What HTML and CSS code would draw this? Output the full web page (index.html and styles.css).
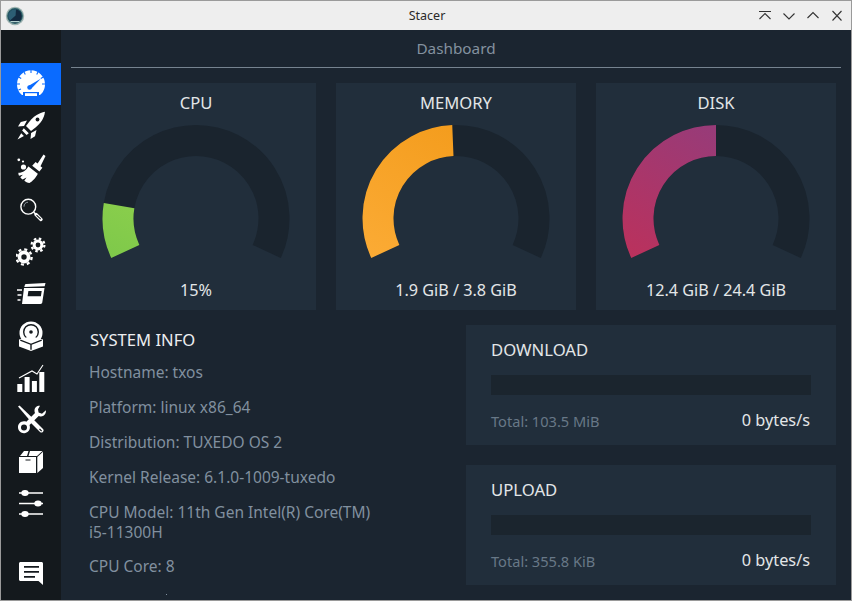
FILE: index.html
```html
<!DOCTYPE html>
<html lang="en">
<head>
<meta charset="utf-8">
<title>Stacer</title>
<link rel="stylesheet" href="styles.css">
</head>
<body>
<div class="window">
  <header class="titlebar">
    <div class="app-icon">
      <svg width="20" height="20" viewBox="0 0 20 20">
        <circle cx="10" cy="10" r="9.200" fill="#9fb3b1"/>
        <circle cx="10" cy="10" r="7.900" fill="#2a6068"/>
        <circle cx="10" cy="10" r="6.800" fill="#12293f"/>
        <path d="M5 14.500A6.800 6.800 0 0 1 11 3.300L10.600 9.500Z" fill="#2c5e74"/>
        <path d="M5.500 15.600h9" stroke="#b5d0ce" stroke-width="1.200"/>
      </svg>
    </div>
    <div class="app-title">Stacer</div>
    <div class="controls">
      <span class="ctl"><svg width="16" height="16" viewBox="0 0 16 16"><path class="ctl-stroke" d="M2 3.500h12M2.500 11L8 5.500l5.500 5.500"/></svg></span>
      <span class="ctl"><svg width="16" height="16" viewBox="0 0 16 16"><path class="ctl-stroke" d="M2.500 5.500L8 11l5.500-5.500"/></svg></span>
      <span class="ctl"><svg width="16" height="16" viewBox="0 0 16 16"><path class="ctl-stroke" d="M2.500 10L8 4.500l5.500 5.500"/></svg></span>
      <span class="ctl"><svg width="16" height="16" viewBox="0 0 16 16"><path class="ctl-stroke" d="M3.500 3l9 9.500M12.500 3l-9 9.500"/></svg></span>
    </div>
  </header>
  <div class="body">
    <nav class="sidebar">
      <div class="nav-item active">
        <svg class="ico" viewBox="0 0 30 30">
          <path fill="#fff" d="M4.400 24.500A14 14 0 1 1 25.600 24.500L24 26H6Z"/>
          <g stroke="#0a6bff" stroke-width="1.100">
            <path d="M15 1v3M8 3l1.300 2.600M22 3l-1.300 2.600M2.700 8l2.500 1.500M27.300 8l-2.500 1.500M1 15h3M29 15h-3M2.500 21l2.500-1"/>
          </g>
          <path d="M11.500 17.500L25 9.500L15 20Z" fill="#0a6bff"/>
          <circle cx="13.500" cy="18.500" r="2.200" fill="#0a6bff"/>
          <path d="M7 23h16v4H7z" fill="#0a6bff"/>
          <path d="M9 24.200h12v2.800H9z" fill="#fff"/>
        </svg>
      </div>
      <div class="nav-item">
        <svg class="ico" viewBox="0 0 30 30">
          <path fill="#fff" d="M29 .8C23 2 18 5 13.500 10.500L10 15l5 5 4.500-3.500C25 12 28 7.500 29 .8Z"/>
          <circle cx="21.500" cy="8.500" r="1.900" fill="#14191d"/>
          <path fill="#fff" d="M11 9.500L4.800 11 2 15.500l6-.6ZM20.500 19l-1.500 6.200-4.500 2.800.6-6Z"/>
          <path fill="#fff" d="M7.800 17.300l5 5-2.200 1.700-4.500-4.500ZM5.200 22.200l2.700 2.700L1.500 28.500Z"/>
        </svg>
      </div>
      <div class="nav-item">
        <svg class="ico" viewBox="0 0 30 30">
          <circle cx="2.800" cy="6.800" r="1.400" fill="#fff"/>
          <circle cx="7" cy="8.500" r="1.100" fill="#fff"/>
          <circle cx="7.500" cy="14" r="2.600" fill="#fff"/>
          <path fill="#fff" d="M27.500 1.500l2 1.500-5 10.200 1.900 1.600-3 3.700-7.200-5.800 3.400-3.600 2 1.300Z"/>
          <path fill="#fff" d="M12.500 13.500l9.300 7.300C20 24.500 16.500 28.500 13.500 30c-2.200-.3-3.800-1.100-5.200-2.200l2.200-3.300-3.900 2c-.9-.7-1.700-1.500-2.300-2.300l2.600-2.500-3.900 1c-.5-.9-.8-1.900-.6-2.900 4.800-.1 7.900-2.800 9.900-6.300Z"/>
        </svg>
      </div>
      <div class="nav-item">
        <svg class="ico" viewBox="0 0 30 30">
          <circle cx="12.300" cy="11.700" r="7.400" fill="none" stroke="#fff" stroke-width="1.400"/>
          <path d="M8 11.700a4.500 4.500 0 0 1 4-4.500" fill="none" stroke="#8b949c" stroke-width="1"/>
          <path d="M17.800 17.200l2 2" stroke="#fff" stroke-width="1.500"/>
          <path d="M20 19.600l5 4.800" stroke="#fff" stroke-width="3.400" stroke-linecap="round"/>
          <path d="M20.500 20.100l4.200 4" stroke="#14191d" stroke-width="1.100"/>
        </svg>
      </div>
      <div class="nav-item">
        <svg class="ico" viewBox="0 0 30 30">
          <circle cx="8" cy="20" r="6.400" fill="#fff"/>
          <circle cx="8" cy="20" r="7.600" fill="none" stroke="#fff" stroke-width="2.400" stroke-dasharray="3 2.970"/>
          <circle cx="8" cy="20" r="2.700" fill="#14191d"/>
          <circle cx="22" cy="8" r="5.400" fill="#fff"/>
          <circle cx="22" cy="8" r="6.400" fill="none" stroke="#fff" stroke-width="2.200" stroke-dasharray="2.500 2.530"/>
          <circle cx="22" cy="8" r="2.400" fill="#14191d"/>
        </svg>
      </div>
      <div class="nav-item">
        <svg class="ico" viewBox="0 0 30 30">
          <path fill="#fff" d="M8.800 6.300C9 5.500 9.500 5 10.500 5L29.500 4 28.700 7.200 8.300 8Z"/>
          <path fill="#fff" fill-rule="evenodd" d="M8 9h20.500L26.300 23.300c-.1.900-.8 1.700-1.800 1.700H6Zm4.400 3l-.8 5.200h13.300l.8-5.200Z"/>
          <path d="M1 11h5M1.500 16h4M1.500 21h3" stroke="#fff" stroke-width="1.300"/>
        </svg>
      </div>
      <div class="nav-item">
        <svg class="ico" viewBox="0 0 30 30">
          <circle cx="15" cy="12" r="11.500" fill="#fff"/>
          <circle cx="15" cy="11" r="7.300" fill="none" stroke="#14191d" stroke-width="1.400"/>
          <circle cx="15" cy="11" r="1.800" fill="#14191d"/>
          <path fill="#fff" d="M15 15l12 3.500v7L15 30 3 25.500v-7Z"/>
          <path fill="none" stroke="#14191d" stroke-width="1.400" d="M4.300 19.200L15 23.300l10.700-4.100"/>
          <path fill="none" stroke="#14191d" stroke-width="1.400" d="M15 23.300v5.500"/>
        </svg>
      </div>
      <div class="nav-item">
        <svg class="ico" viewBox="0 0 30 30">
          <path fill="#fff" d="M1.300 21h5v8h-5ZM8.600 14h5v15h-5ZM15.900 18h5v11h-5ZM23.300 9h5v20h-5Z"/>
          <path d="M3 15L16 8l5 3 6-9" fill="none" stroke="#fff" stroke-width="1.100"/>
        </svg>
      </div>
      <div class="nav-item">
        <svg class="ico" viewBox="0 0 30 30">
          <path d="M2 1.500l1.500-1L16 12.500l-2.500 2.500Z" fill="#fff"/>
          <path d="M17.500 14.500L27 24c1.800 2-1 4.800-3 3L14.500 17.500Z" fill="#fff"/>
          <path d="M23.500 24l2.200 2.200" stroke="#14191d" stroke-width="1.200"/>
          <path fill="#fff" fill-rule="evenodd" d="M24 .800c-2.800-.3-5.600 1.700-5.500 5 0 .9.200 1.500.5 2.200L10.300 16.700c-.8-.3-1.600-.5-2.500-.4-3.400.1-6 2.900-5.800 6.200.2 3.400 3 5.900 6.300 5.700 3.400-.2 5.800-3 5.600-6.300 0-.6-.2-1.200-.4-1.800l9.200-9c.8.300 1.500.4 2.300.3 3.200-.2 5.300-3.100 4.900-6.200l-3.900 3.500-3.400-1.100-.6-3.400ZM8 19.500a3 3 0 1 1 0 6 3 3 0 0 1 0-6Z"/>
        </svg>
      </div>
      <div class="nav-item">
        <svg class="ico" viewBox="0 0 30 30">
          <path fill="#fff" d="M3 10h17v16H3Z"/>
          <path fill="#fff" d="M4 9L8 4h4.500L11 9ZM12.500 9l1.500-5h12.500l-5.500 5Z"/>
          <path fill="#fff" d="M21.300 10l5.700-5.200V21l-5.700 5Z"/>
          <path d="M9.500 13h5" stroke="#14191d" stroke-width="1"/>
        </svg>
      </div>
      <div class="nav-item">
        <svg class="ico" viewBox="0 0 30 30">
          <path d="M3 4h24M3 14.500h24M3 25h24" stroke="#fff" stroke-width="1.700"/>
          <ellipse cx="9" cy="4" rx="3.700" ry="3" fill="#fff"/>
          <ellipse cx="22" cy="14.500" rx="3.700" ry="3" fill="#fff"/>
          <ellipse cx="9" cy="25" rx="3.700" ry="3" fill="#fff"/>
        </svg>
      </div>
      <div class="nav-item feedback">
        <svg class="ico" viewBox="0 0 30 30">
          <path fill="#fff" fill-rule="evenodd" d="M4.500 4h21c.8 0 1.500.7 1.500 1.500V27l-4.500-4H4.500C3.700 23 3 22.300 3 21.500v-16C3 4.700 3.700 4 4.500 4ZM8 8v1.800h15V8ZM8 13v1.800h15V13ZM8 18v1.800h11V18Z"/>
        </svg>
      </div>
    </nav>
    <main class="content">
      <h1 class="page-title">Dashboard</h1>
      <section class="gauges">
        <article class="card gauge">
          <h2 class="gauge-title">CPU</h2>
          <svg class="gauge-svg" viewBox="0 0 240 165">
            <defs>
              <linearGradient id="g-cpu" gradientUnits="userSpaceOnUse" x1="30" y1="150" x2="60" y2="90"><stop offset="0" stop-color="#7dc84a"/><stop offset="1" stop-color="#8ace4c"/></linearGradient>
              <linearGradient id="g-mem" gradientUnits="userSpaceOnUse" x1="40" y1="150" x2="120" y2="20"><stop offset="0" stop-color="#fbab35"/><stop offset="1" stop-color="#f49d1e"/></linearGradient>
              <linearGradient id="g-disk" gradientUnits="userSpaceOnUse" x1="40" y1="150" x2="120" y2="20"><stop offset="0" stop-color="#bb315c"/><stop offset="1" stop-color="#983b78"/></linearGradient>
            </defs>
            <path class="track" d="M49.310 138.460A78 78 0 1 1 190.690 138.460"/>
            <path class="fill" stroke="url(#g-cpu)" d="M49.310 138.460A78 78 0 0 1 43.070 92.630"/>
          </svg>
          <div class="gauge-value">15%</div>
        </article>
        <article class="card gauge">
          <h2 class="gauge-title">MEMORY</h2>
          <svg class="gauge-svg" viewBox="0 0 240 165">
            <path class="track" d="M49.310 138.460A78 78 0 1 1 190.690 138.460"/>
            <path class="fill" stroke="url(#g-mem)" d="M49.310 138.460A78 78 0 0 1 116.870 27.560"/>
          </svg>
          <div class="gauge-value">1.9 GiB / 3.8 GiB</div>
        </article>
        <article class="card gauge">
          <h2 class="gauge-title">DISK</h2>
          <svg class="gauge-svg" viewBox="0 0 240 165">
            <path class="track" d="M49.310 138.460A78 78 0 1 1 190.690 138.460"/>
            <path class="fill" stroke="url(#g-disk)" d="M49.310 138.460A78 78 0 0 1 120 27.500"/>
          </svg>
          <div class="gauge-value">12.4 GiB / 24.4 GiB</div>
        </article>
      </section>
      <section class="lower">
        <div class="info">
          <h2 class="info-title">SYSTEM INFO</h2>
          <ul class="info-list">
            <li>Hostname: txos</li>
            <li>Platform: linux x86_64</li>
            <li>Distribution: TUXEDO OS 2</li>
            <li>Kernel Release: 6.1.0-1009-tuxedo</li>
            <li>CPU Model: 11th Gen Intel(R) Core(TM) i5-11300H</li>
            <li>CPU Core: 8</li>
          </ul>
          <span class="info-clip-dot"></span>
        </div>
        <div class="net">
          <article class="card net-card">
            <h2 class="net-title">DOWNLOAD</h2>
            <div class="net-bar"></div>
            <div class="net-row"><span class="net-total">Total: 103.5 MiB</span><span class="net-speed">0 bytes/s</span></div>
          </article>
          <article class="card net-card">
            <h2 class="net-title">UPLOAD</h2>
            <div class="net-bar"></div>
            <div class="net-row"><span class="net-total">Total: 355.8 KiB</span><span class="net-speed">0 bytes/s</span></div>
          </article>
        </div>
      </section>
    </main>
  </div>
</div>
</body>
</html>
```
FILE: styles.css
```css
* { box-sizing: border-box; }
html, body { margin: 0; padding: 0; height: 100%; overflow: hidden; }
body { font-family: "Noto Sans", "Open Sans", sans-serif; background: #1b2530; }
h1, h2, ul { margin: 0; padding: 0; font-weight: 400; }
ul { list-style: none; }

.window {
  width: 852px; height: 601px;
  border: 1px solid #9a9a9a;
  display: flex; flex-direction: column;
  overflow: hidden;
}

.titlebar {
  height: 29px; flex: none;
  background: #eeeeee;
  display: grid; grid-template-columns: 1fr auto 1fr; align-items: center;
  padding: 0 2px 0 4px;
}
.app-icon { display: flex; align-items: center; }
.app-title { font-size: 12.500px; color: #2a2a2a; }
.controls { display: flex; justify-content: flex-end; }
.ctl { width: 24px; height: 24px; display: flex; align-items: center; justify-content: center; }
.ctl-stroke { fill: none; stroke: #333; stroke-width: 1.100; }

.body { flex: 1; display: flex; min-height: 0; }

.sidebar {
  width: 60px; flex: none;
  background: #14191d;
  display: flex; flex-direction: column;
  padding: 33px 0 6px;
}
.nav-item { height: 42px; flex: none; display: flex; align-items: center; justify-content: center; }
.nav-item.active { background: #0a6bff; }
.nav-item.feedback { margin-top: auto; }
.ico { width: 30px; height: 30px; display: block; }

.content { flex: 1; min-width: 0; padding: 0 10px 0 10px; overflow: hidden; }
.page-title {
  font-size: 15.300px; line-height: 20px; color: #83919f; text-align: center;
  padding: 8px 0 9px;
  border-bottom: 1px solid #76838f;
  height: 38px;
  margin-bottom: 15px;
}

.card { background: #212e3b; }

.gauges { display: grid; grid-template-columns: repeat(3, 240px); column-gap: 20px; padding-left: 5px; margin-bottom: 15px; }
.gauge { height: 227px; padding: 10px 0; display: flex; flex-direction: column; align-items: center; }
.gauge-title { font-size: 16.600px; line-height: 20px; color: #e3e6e8; text-align: center; flex: none; }
.gauge-value { font-size: 16.200px; line-height: 20px; color: #e3e6e8; text-align: center; flex: none; }
.gauge-svg { width: 240px; height: 165px; display: block; flex: none; margin-bottom: 2px; }
.track, .fill { fill: none; stroke-width: 31; }
.track { stroke: #1a242e; }

.lower { display: grid; grid-template-columns: 390px 370px; padding-left: 5px; }
.info { padding: 5px 0 0 13px; position: relative; }
.info-title { font-size: 16.600px; line-height: 20px; color: #eceef0; padding-left: 1px; margin-bottom: 12px; }
.info-list { width: 292px; font-size: 15.500px; line-height: 20px; color: #81909f; display: flex; flex-direction: column; row-gap: 15px; }
.info-list li:last-child { margin-top: -1px; }
.info-clip-dot { position: absolute; left: 90px; top: 269px; width: 1px; height: 1px; background: #81909f; }

.net { display: flex; flex-direction: column; row-gap: 20px; }
.net-card { height: 120px; padding: 15px 25px 0; }
.net-title { font-size: 16.700px; line-height: 20px; color: #e3e6e8; }
.net-bar { height: 20px; margin-top: 15px; background: #1b252e; }
.net-row { display: flex; justify-content: space-between; align-items: center; margin-top: 15px; height: 20px; }
.net-total { font-size: 14.600px; color: #687887; position: relative; top: 1px; }
.net-speed { font-size: 16.300px; color: #e3e6e8; padding-right: 1px; }
```
